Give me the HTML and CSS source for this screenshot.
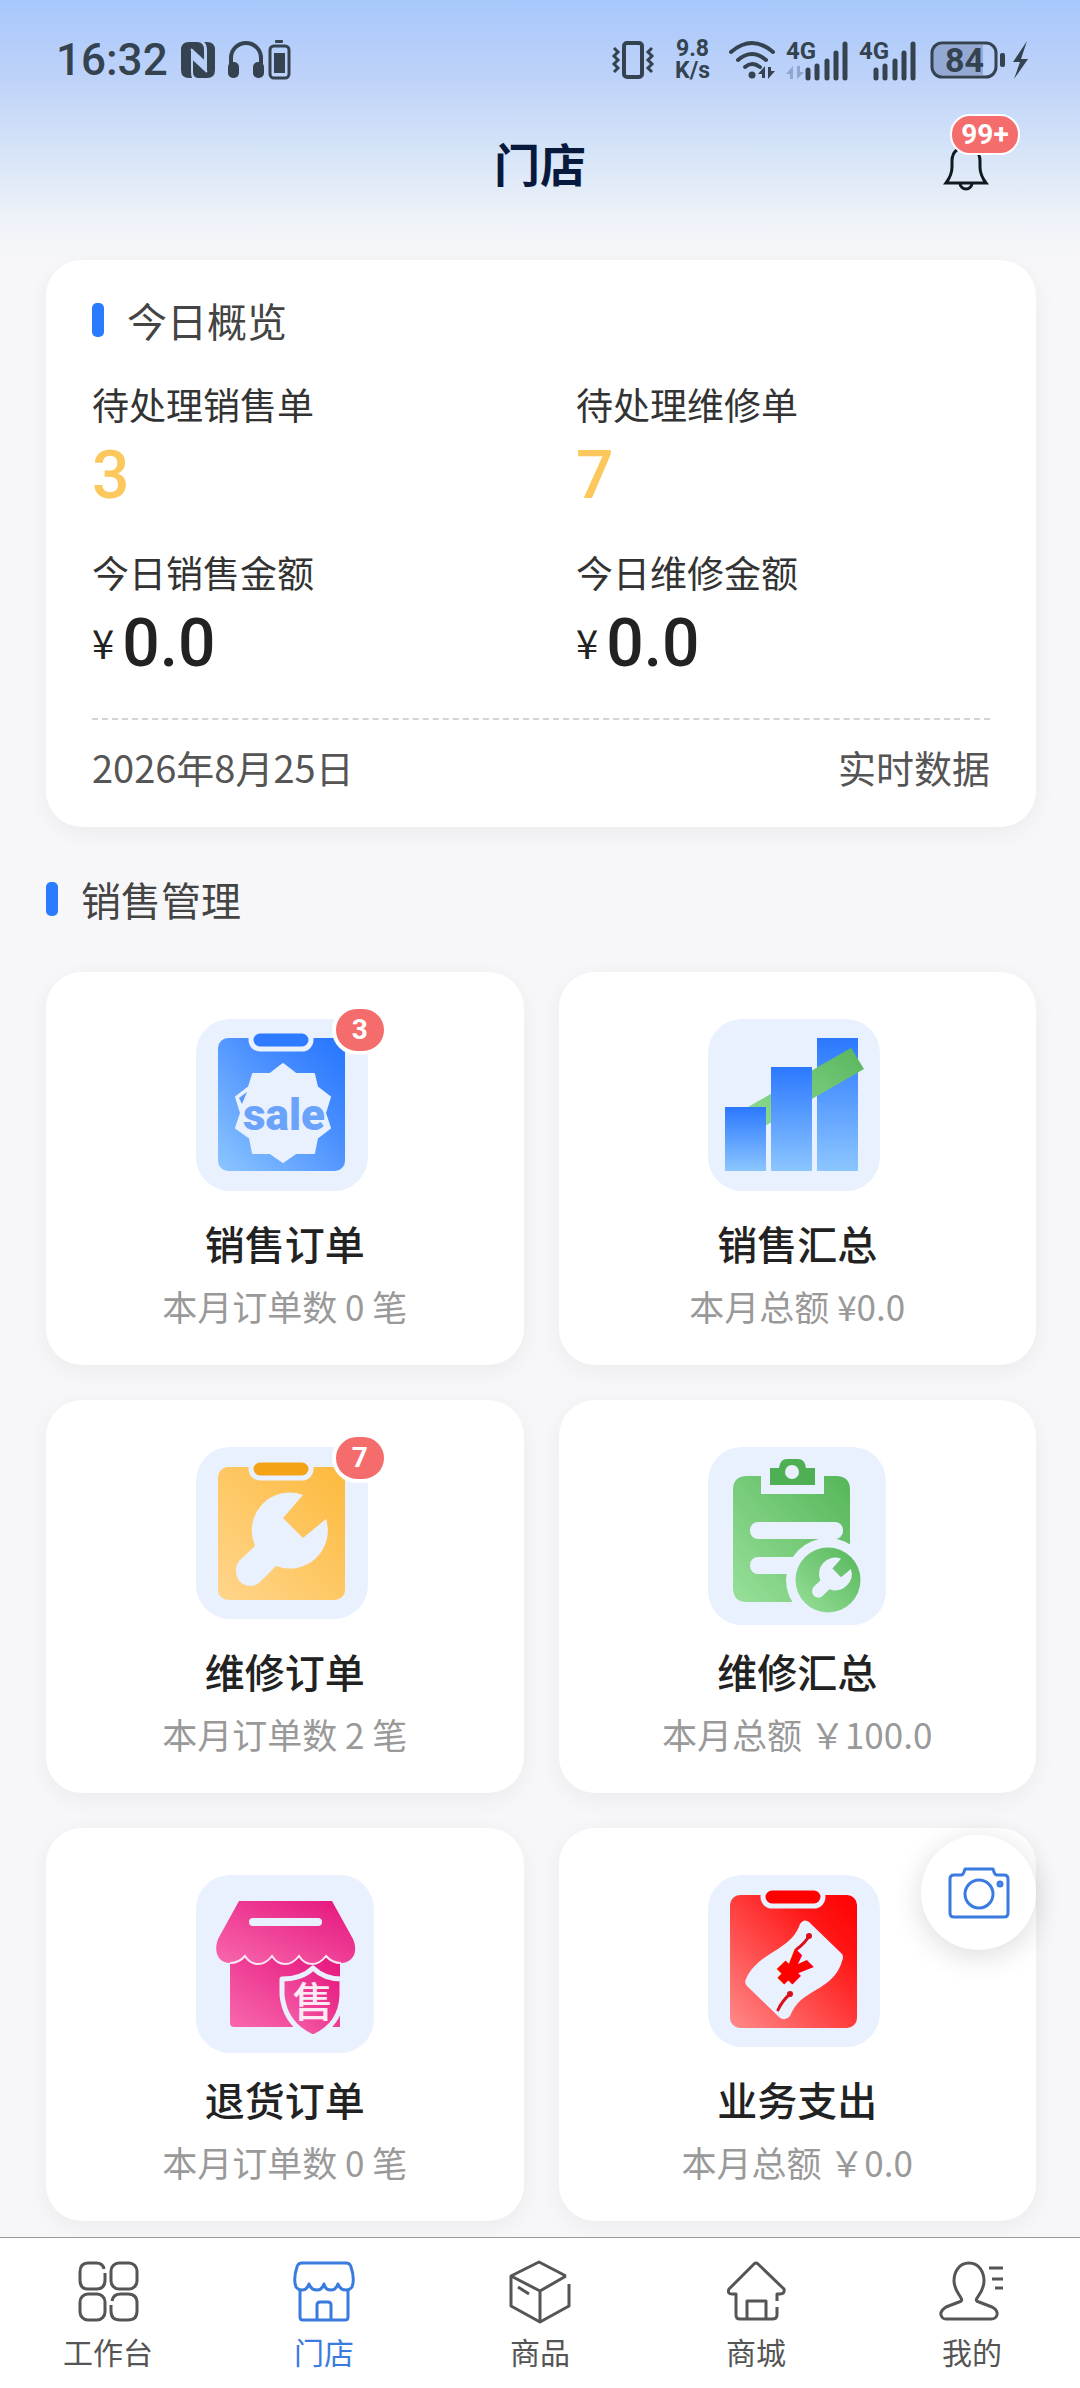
FILE: index.html
```
<!DOCTYPE html>
<html lang="zh-CN">
<head>
  <meta charset="UTF-8">
  <meta name="viewport" content="width=device-width, initial-scale=1.0">
  <title>门店</title>
  <link rel="stylesheet" href="styles.css">
</head>
<body>

  <!-- 状态栏 -->
  <div class="status-bar">
    <div class="status-left">
      <span class="time">16:32</span>
      <svg class="nfc" width="34" height="36" viewBox="0 0 34 36">
        <path d="M8 0h8q7 0 7 8v11L10 7v21q0 6 1 8H8q-8 0-8-8V8q0-8 8-8z" fill="#34434f"/>
        <path d="M23 0h3q8 0 8 8v20q0 8-8 8h-8q-6 0-6-6V17l14 13V9q0-7-3-9z" fill="#34434f"/>
        <path d="M10 7l13 12M12 17l14 13M12 12v6M24 10v16" fill="none" stroke="#b7cdf8" stroke-width="2"/>
      </svg>
      <svg class="headphone" width="36" height="38" viewBox="0 0 36 38">
        <path d="M3 28V17a15 15 0 0 1 30 0v11" fill="none" stroke="#34434f" stroke-width="4"/>
        <rect x="0" y="21" width="11" height="16" rx="5" fill="#34434f"/>
        <rect x="25" y="21" width="11" height="16" rx="5" fill="#34434f"/>
      </svg>
      <svg width="22" height="40" viewBox="0 0 22 40">
        <rect x="7" y="0" width="8" height="3" rx="1" fill="#34434f"/>
        <rect x="2" y="6" width="19" height="32" rx="4" fill="none" stroke="#34434f" stroke-width="3"/>
        <rect x="6" y="13" width="11" height="20" fill="#34434f"/>
      </svg>
    </div>
    <div class="status-right">
      <svg width="42" height="38" viewBox="0 0 42 38">
        <rect x="12" y="2" width="18" height="34" rx="3" fill="none" stroke="#34434f" stroke-width="4"/>
        <path d="M2 7l4 4-4 4 4 4-4 4 4 4-4 4M40 7l-4 4 4 4-4 4 4 4-4 4 4 4" fill="none" stroke="#34434f" stroke-width="3"/>
      </svg>
      <div class="speed"><span>9.8</span><span>K/s</span></div>
      <svg class="wifi" width="47" height="38" viewBox="0 0 47 38">
        <g fill="none" stroke="#34434f" stroke-width="4" stroke-linecap="round">
          <path d="M2 11q21-18 42 0"/>
          <path d="M9 19q14-12 28 0"/>
          <path d="M16 26q7-6 15 0"/>
        </g>
        <circle cx="23" cy="34" r="3.5" fill="#34434f"/>
        <path d="M29 33l7-8v12h-3v-4zM46 30l-7 8V26h3v4z" fill="#34434f"/>
      </svg>
      <svg width="63" height="40" viewBox="0 0 63 40">
        <text x="0" y="19" class="net">4G</text>
        <path d="M0 34l7-8v13H4v-5zM18 32l-7 7V26h3v6z" fill="#8fa6d0"/>
        <path d="M22 30v8M31 26v12M41 21v17M50 13v25M59 4v34" stroke="#34434f" stroke-width="5" stroke-linecap="round"/>
      </svg>
      <svg class="signal" width="58" height="40" viewBox="0 0 58 40">
        <text x="0" y="19" class="net">4G</text>
        <path d="M17 30v8M26 26v12M36 21v17M45 13v25M54 4v34" stroke="#34434f" stroke-width="5" stroke-linecap="round"/>
      </svg>
      <svg width="100" height="40" viewBox="0 0 100 40">
        <path d="M10 5h43v30H10q-7 0-7-7V12q0-7 7-7z" fill="#93a9d3"/>
        <rect x="2" y="3" width="64" height="34" rx="10" fill="none" stroke="#34434f" stroke-width="3"/>
        <rect x="70" y="13" width="5" height="14" rx="2" fill="#34434f"/>
        <path d="M97 1L83 22h7l-6 17 14-20h-7z" fill="#34434f"/>
        <text x="15" y="32" class="power">84</text>
      </svg>
    </div>
  </div>

  <!-- 标题 -->
  <header class="header">
    <h1>门店</h1>
    <button type="button" class="bell" aria-label="消息">
      <svg width="44" height="48" viewBox="0 0 44 48">
        <path d="M2 41h40q-6-8-6-16v-6C36 10 30 5 22 5S8 10 8 19v6q0 8-6 16z" fill="none" stroke="#101820" stroke-width="3"/>
        <path d="M16 41a6 6 0 0 0 12 0" fill="none" stroke="#101820" stroke-width="3"/>
      </svg>
      <span class="badge badge-bell">99+</span>
    </button>
  </header>

  <main class="main">
    <!-- 今日概览 -->
    <section class="overview">
      <h2 class="section-title">今日概览</h2>
      <div class="metrics">
        <div class="metric">
          <p class="metric-label">待处理销售单</p>
          <p class="metric-value pending">3</p>
        </div>
        <div class="metric">
          <p class="metric-label">待处理维修单</p>
          <p class="metric-value pending">7</p>
        </div>
        <div class="metric">
          <p class="metric-label">今日销售金额</p>
          <p class="metric-value"><span class="yen">¥</span>0.0</p>
        </div>
        <div class="metric">
          <p class="metric-label">今日维修金额</p>
          <p class="metric-value"><span class="yen">¥</span>0.0</p>
        </div>
      </div>
      <div class="overview-footer">
        <span>2026年8月25日</span>
        <span>实时数据</span>
      </div>
    </section>

    <!-- 销售管理 -->
    <h2 class="section-title manage-title">销售管理</h2>
    <div class="card-grid">
      <a class="card" href="#">
        <span class="card-icon">
          <svg width="176" height="176" viewBox="0 0 176 176">
            <defs>
              <linearGradient id="blue" x1="0" y1="1" x2="1" y2="0">
                <stop offset="0" stop-color="#8cc6ff"/>
                <stop offset="0.6" stop-color="#4a8fff"/>
                <stop offset="1" stop-color="#2474ff"/>
              </linearGradient>
            </defs>
            <rect width="172" height="172" rx="34" fill="#e9f1ff"/>
            <rect x="22" y="19" width="127" height="133" rx="10" fill="url(#blue)"/>
            <rect x="55" y="12" width="60" height="18" rx="9" fill="#2f7bff" stroke="#e9f1ff" stroke-width="5"/>
            <path d="M87 45L100 55H118L121 68L134 78L129 94L134 109L121 119L118 134H100L87 143L74 134H57L54 119L40 109L45 94L40 78L53 68L57 55H74Z" fill="#e9f1ff" stroke="#e9f1ff" stroke-width="2" stroke-linejoin="round"/>
            <path d="M43 79l8-6-5 12z" fill="#5a98ff"/>
            <text x="88" y="111" class="sale">sale</text>
          </svg>
          <span class="badge badge-card">3</span>
        </span>
        <span class="card-name">销售订单</span>
        <span class="card-desc">本月订单数 0 笔</span>
      </a>

      <a class="card" href="#">
        <span class="card-icon">
          <svg width="176" height="176" viewBox="0 0 176 176">
            <defs>
              <linearGradient id="bar" x1="0" y1="0" x2="0" y2="1">
                <stop offset="0" stop-color="#2b78ff"/>
                <stop offset="1" stop-color="#8cc6ff"/>
              </linearGradient>
              <linearGradient id="trend" x1="0" y1="1" x2="1" y2="0">
                <stop offset="0" stop-color="#90db94"/>
                <stop offset="1" stop-color="#58b65c"/>
              </linearGradient>
            </defs>
            <rect width="172" height="172" rx="34" fill="#e9f1ff"/>
            <rect x="109" y="19" width="41" height="133" fill="url(#bar)"/>
            <path d="M40 88L143 29L156 50L57 107Z" fill="url(#trend)"/>
            <rect x="17" y="88" width="41" height="64" fill="url(#bar)"/>
            <rect x="63" y="48" width="41" height="104" fill="url(#bar)"/>
          </svg>
        </span>
        <span class="card-name">销售汇总</span>
        <span class="card-desc">本月总额 ¥0.0</span>
      </a>

      <a class="card" href="#">
        <span class="card-icon">
          <svg width="176" height="176" viewBox="0 0 176 176">
            <defs>
              <linearGradient id="orange" x1="0" y1="1" x2="1" y2="0">
                <stop offset="0" stop-color="#ffd58c"/>
                <stop offset="1" stop-color="#fdba3c"/>
              </linearGradient>
            </defs>
            <rect width="172" height="172" rx="34" fill="#e9f1ff"/>
            <rect x="22" y="20" width="127" height="133" rx="10" fill="url(#orange)"/>
            <rect x="55" y="13" width="60" height="18" rx="9" fill="#f5a316" stroke="#e9f1ff" stroke-width="5"/>
            <path id="wrench" d="M107 48A38 38 0 0 0 59 99L44 113C36 121 40 139 55 139Q60 139 64 135L80 119A38 38 0 0 0 130 72L107 91L87 71Z" fill="#e9f1ff"/>
          </svg>
          <span class="badge badge-card">7</span>
        </span>
        <span class="card-name">维修订单</span>
        <span class="card-desc">本月订单数 2 笔</span>
      </a>

      <a class="card" href="#">
        <span class="card-icon">
          <svg width="176" height="176" viewBox="0 0 176 176">
            <defs>
              <linearGradient id="green" x1="0" y1="1" x2="1" y2="0">
                <stop offset="0" stop-color="#98e09a"/>
                <stop offset="1" stop-color="#55b658"/>
              </linearGradient>
            </defs>
            <rect width="178" height="178" rx="34" fill="#e9f1ff"/>
            <path d="M39 29H53V47H116V29H128Q142 29 142 43V155H39Q25 155 25 141V43Q25 29 39 29Z" fill="url(#green)"/>
            <path d="M62 21H71Q72 12 79 12H90Q97 12 98 21H107V38H62Z" fill="#4fb053"/>
            <circle cx="84" cy="25" r="7" fill="#e9f1ff"/>
            <rect x="42" y="75" width="93" height="17" rx="8" fill="#e9f1ff"/>
            <rect x="42" y="110" width="70" height="17" rx="8" fill="#e9f1ff"/>
            <circle cx="120" cy="133" r="42" fill="#e9f1ff"/>
            <circle cx="120" cy="133" r="32.5" fill="url(#green)"/>
            <use href="#wrench" transform="translate(87 91) scale(0.43)"/>
          </svg>
        </span>
        <span class="card-name">维修汇总</span>
        <span class="card-desc">本月总额 &#xFFE5;100.0</span>
      </a>

      <a class="card" href="#">
        <span class="card-icon">
          <svg width="176" height="176" viewBox="0 0 176 176">
            <defs>
              <linearGradient id="pink" x1="0" y1="1" x2="1" y2="0">
                <stop offset="0" stop-color="#f868ae"/>
                <stop offset="1" stop-color="#e5147c"/>
              </linearGradient>
            </defs>
            <rect width="178" height="178" rx="34" fill="#e9f1ff"/>
            <path d="M34 80H144V152H38Q34 152 34 148Z" fill="url(#pink)"/>
            <path d="M43 26H136L157 64C163 78 156 88 145 88Q136 88 130 81Q125 89 116 89T103 81Q98 89 89 89T76 81Q71 89 62 89T49 81Q43 88 34 88C23 88 17 78 22 64Z" fill="url(#pink)"/>
            <path d="M34 88Q43 88 49 81Q54 89 62 89T76 81Q81 89 89 89T103 81Q108 89 116 89T130 81Q136 88 145 88" fill="none" stroke="#fbe6f4" stroke-width="2"/>
            <rect x="53" y="43" width="73" height="8" rx="4" fill="#e9f1ff"/>
            <path d="M117 93Q128 104 146 104V120Q145 150 117 162Q89 150 86 120V104Q106 104 117 93Z" fill="url(#pink)" stroke="#e9f1ff" stroke-width="5" stroke-linejoin="round"/>
            <text x="117" y="142" class="seal">售</text>
          </svg>
        </span>
        <span class="card-name">退货订单</span>
        <span class="card-desc">本月订单数 0 笔</span>
      </a>

      <a class="card" href="#">
        <span class="card-icon">
          <svg width="176" height="176" viewBox="0 0 176 176">
            <defs>
              <linearGradient id="red" x1="0" y1="1" x2="1" y2="0">
                <stop offset="0" stop-color="#ff8a8a"/>
                <stop offset="0.75" stop-color="#ff1414"/>
                <stop offset="1" stop-color="#ff0000"/>
              </linearGradient>
            </defs>
            <rect width="172" height="172" rx="34" fill="#e9f1ff"/>
            <rect x="22" y="20" width="127" height="133" rx="10" fill="url(#red)"/>
            <rect x="55" y="13" width="60" height="18" rx="9" fill="#ff0000" stroke="#e9f1ff" stroke-width="5"/>
            <path d="M101 47L134 79Q136 82 134 86C129 105 112 112 100 120C90 126 86 132 82 141Q77 147 71 142L39 111Q36 108 38 104C44 89 60 80 70 74C82 66 88 60 92 49Q96 43 101 47Z" fill="#e9f1ff"/>
            <path d="M89 74Q97 68 101 61M70 135Q74 126 82 119" fill="none" stroke="#d9101c" stroke-width="3" stroke-linecap="round"/>
            <circle cx="101" cy="61" r="3" fill="#d9101c"/>
            <circle cx="82" cy="119" r="3" fill="#d9101c"/>
            <text x="85" y="110" class="note-yen" transform="rotate(45 85 94)">¥</text>
          </svg>
        </span>
        <span class="card-name">业务支出</span>
        <span class="card-desc">本月总额 &#xFFE5;0.0</span>
      </a>
    </div>
  </main>

  <!-- 拍照悬浮按钮 -->
  <button type="button" class="camera" aria-label="拍照">
    <svg width="62" height="52" viewBox="0 0 62 52" fill="none" stroke="#3a7be0" stroke-width="3" stroke-linejoin="round">
      <path d="M6 8H13Q15 8 16 5L17 2H45L46 5Q47 8 49 8H56Q60 8 60 12V46Q60 50 56 50H6Q2 50 2 46V12Q2 8 6 8Z"/>
      <circle cx="31" cy="27" r="14"/>
      <circle cx="52" cy="17" r="2"/>
    </svg>
  </button>

  <!-- 底部导航 -->
  <nav class="tab-bar">
    <a class="tab" href="#">
      <svg viewBox="0 0 60 60">
        <path d="M27 12V19Q27 28 18 28H10Q2 28 2 19V11Q2 2 10 2H18Q25 2 26 8"/>
        <rect x="33" y="2" width="26" height="26" rx="8"/>
        <rect x="2" y="33" width="25" height="26" rx="8"/>
        <path d="M34 40Q35 33 43 33H50Q59 33 59 42V50Q59 59 50 59H42Q33 59 33 50V44"/>
      </svg>
      <span>工作台</span>
    </a>
    <a class="tab active" href="#">
      <svg viewBox="0 0 60 60">
        <path d="M8 2H52Q56 2 57 6Q61 18 58 26Q56 29 52 29Q46 29 44 23Q42 29 37 29Q31 29 30 23Q28 29 23 29Q17 29 15 23Q13 29 8 29Q4 29 2 26Q-1 18 3 6Q4 2 8 2Z"/>
        <path d="M6 29V56Q6 59 9 59H51Q54 59 54 56V29"/>
        <path d="M23 59V44Q23 41 26 41H34Q37 41 37 44V59"/>
      </svg>
      <span>门店</span>
    </a>
    <a class="tab" href="#">
      <svg viewBox="0 0 60 60">
        <path d="M56 15L29 1L1 15V45L30 61L59 45V23"/>
        <path d="M1 15L30 30L56 15M30 30V61M8 26L19 33"/>
      </svg>
      <span>商品</span>
    </a>
    <a class="tab" href="#">
      <svg viewBox="0 0 60 60">
        <path d="M51 40V33H54Q59 33 58 28L32 3Q30 1 28 3L3 28Q1 33 6 33H10V54Q10 58 14 58H46Q51 58 51 54V46"/>
        <path d="M21 58V40H40V58"/>
      </svg>
      <span>商城</span>
    </a>
    <a class="tab" href="#">
      <svg viewBox="0 0 60 60">
        <path d="M27 2C17 2 12 11 12 20C12 28 17 33 19 37Q21 40 17 41L4 46Q-2 50-1 54Q0 58 4 58H49Q54 58 55 54Q56 49 50 46L37 41Q33 40 35 37C38 33 42 28 42 20C42 11 37 2 27 2Z"/>
        <path d="M47 7H61M50 18H61M53 27H61"/>
      </svg>
      <span>我的</span>
    </a>
  </nav>

</body>
</html>
```
FILE: styles.css
```
* {
  box-sizing: border-box;
}

body {
  margin: 0;
  min-height: 100vh;
  display: flex;
  flex-direction: column;
  font-family: "Noto Sans CJK SC", "Noto Sans", sans-serif;
  color: #222;
  background: #f7f7f9 linear-gradient(#a7c7fb, #bfd3f9 80px, #d9e6f8 160px, #edf1f8 215px, #f7f7f9 260px) no-repeat;
}

h1, h2, p {
  margin: 0;
}

a {
  color: inherit;
  text-decoration: none;
}

button {
  padding: 0;
  border: none;
  background: none;
  cursor: pointer;
}

svg {
  display: block;
  overflow: visible;
}

/* 状态栏 */
.status-bar {
  height: 120px;
  padding: 0 50px 0 56px;
  display: flex;
  align-items: center;
  justify-content: space-between;
  font-family: Roboto, sans-serif;
  color: #34434f;
}

.status-left,
.status-right {
  display: flex;
  align-items: center;
}

.time {
  font-size: 44px;
  font-weight: 500;
  line-height: 60px;
  margin-right: 13px;
}

.nfc {
  margin-right: 13px;
}

.headphone {
  margin-right: 4px;
}

.speed {
  display: flex;
  flex-direction: column;
  align-items: center;
  margin: 0 19px 0 21px;
  font-size: 23px;
  font-weight: 700;
  line-height: 22px;
}

.wifi {
  margin-right: 10px;
}

.signal {
  margin: 0 13px 0 10px;
}

.net,
.power {
  font-family: Roboto, sans-serif;
  font-weight: 700;
  font-size: 24px;
  fill: #34434f;
}

.power {
  font-size: 34px;
}

/* 标题 */
.header {
  position: relative;
  height: 90px;
  padding-bottom: 6px;
  display: flex;
  align-items: center;
  justify-content: center;
}

.header h1 {
  font-size: 46px;
  line-height: 60px;
  font-weight: 700;
  color: #071a3d;
}

.bell {
  position: absolute;
  top: 22px;
  right: 92px;
}

/* 角标 */
.badge {
  position: absolute;
  display: block;
  background: #f56c6c;
  color: #fff;
  font-family: Roboto, sans-serif;
  font-size: 28px;
  font-weight: 700;
  text-align: center;
}

.badge-bell {
  top: -28px;
  left: 6px;
  width: 70px;
  border: 2px solid #fff;
  border-radius: 20px;
  line-height: 37px;
}

.badge-card {
  top: -14px;
  right: -14px;
  width: 56px;
  border: 4px solid #fff;
  border-radius: 25px;
  line-height: 42px;
}

.main {
  flex: 1;
  padding: 50px 44px 16px 46px;
}

/* 小标题 */
.section-title {
  display: flex;
  align-items: center;
  gap: 23px;
  font-size: 40px;
  line-height: 40px;
  font-weight: 400;
  color: #444;
}

.section-title::before {
  content: "";
  width: 12px;
  height: 34px;
  border-radius: 5px;
  background: #2b7bff;
}

.manage-title {
  margin: 52px 0 53px;
}

/* 今日概览 */
.overview {
  padding: 40px 46px 35px;
  border-radius: 36px;
  background: #fff;
  box-shadow: 0 6px 24px rgba(0, 0, 0, 0.05);
}

.metrics {
  display: grid;
  grid-template-columns: 1fr 1fr;
  gap: 24px 70px;
  margin-top: 39px;
}

.metric-label {
  font-size: 37px;
  line-height: 50px;
  color: #333;
}

.metric-value {
  display: flex;
  align-items: center;
  gap: 8px;
  font-family: Roboto, sans-serif;
  font-size: 66px;
  font-weight: 500;
  line-height: 94px;
}

.pending {
  color: #fcc75c;
}

.yen {
  font-family: "Noto Sans CJK SC", sans-serif;
  font-size: 40px;
  font-weight: 400;
  line-height: 60px;
  padding-bottom: 4px;
}

.overview-footer {
  display: flex;
  justify-content: space-between;
  margin-top: 27px;
  padding-top: 22px;
  border-top: 2px dashed #d4d4d4;
  font-size: 38px;
  line-height: 50px;
  color: #555;
}

/* 功能卡片 */
.card-grid {
  display: grid;
  grid-template-columns: 1fr 1fr;
  gap: 35px;
}

.card {
  display: flex;
  flex-direction: column;
  align-items: center;
  padding: 47px 20px 37px;
  border-radius: 36px;
  background: #fff;
  box-shadow: 0 6px 24px rgba(0, 0, 0, 0.05);
}

.card-icon {
  position: relative;
  width: 178px;
  height: 176px;
}

.card-name {
  margin-top: 20px;
  font-size: 40px;
  line-height: 56px;
  font-weight: 500;
}

.card-desc {
  margin-top: 13px;
  font-size: 35px;
  line-height: 44px;
  color: #999;
}

.sale {
  font-family: "Liberation Sans Narrow", Roboto, sans-serif;
  font-size: 44px;
  font-weight: 900;
  text-anchor: middle;
  fill: #6ba3fb;
}

.seal {
  font-size: 41px;
  font-weight: 500;
  text-anchor: middle;
  fill: #fdeaf5;
}

.note-yen {
  font-family: Roboto, sans-serif;
  font-size: 44px;
  font-weight: 900;
  text-anchor: middle;
  fill: #ff0000;
  stroke: #ff0000;
  stroke-width: 2px;
}

/* 拍照悬浮按钮 */
.camera {
  position: fixed;
  right: 44px;
  bottom: 438px;
  width: 115px;
  height: 115px;
  display: flex;
  align-items: center;
  justify-content: center;
  border-radius: 50%;
  background: #fff;
  box-shadow: 0 6px 30px rgba(0, 0, 0, 0.14);
}

/* 底部导航 */
.tab-bar {
  position: sticky;
  bottom: 0;
  display: flex;
  padding: 23px 0 17px;
  border-top: 1px solid #999;
  background: #fff;
}

.tab {
  flex: 1;
  display: flex;
  flex-direction: column;
  align-items: center;
  gap: 10px;
  font-size: 30px;
  line-height: 40px;
  color: #555;
}

.tab svg {
  width: 60px;
  height: 60px;
  fill: none;
  stroke: currentColor;
  stroke-width: 3px;
  stroke-linejoin: round;
}

.tab.active {
  color: #3a7be0;
}
```
